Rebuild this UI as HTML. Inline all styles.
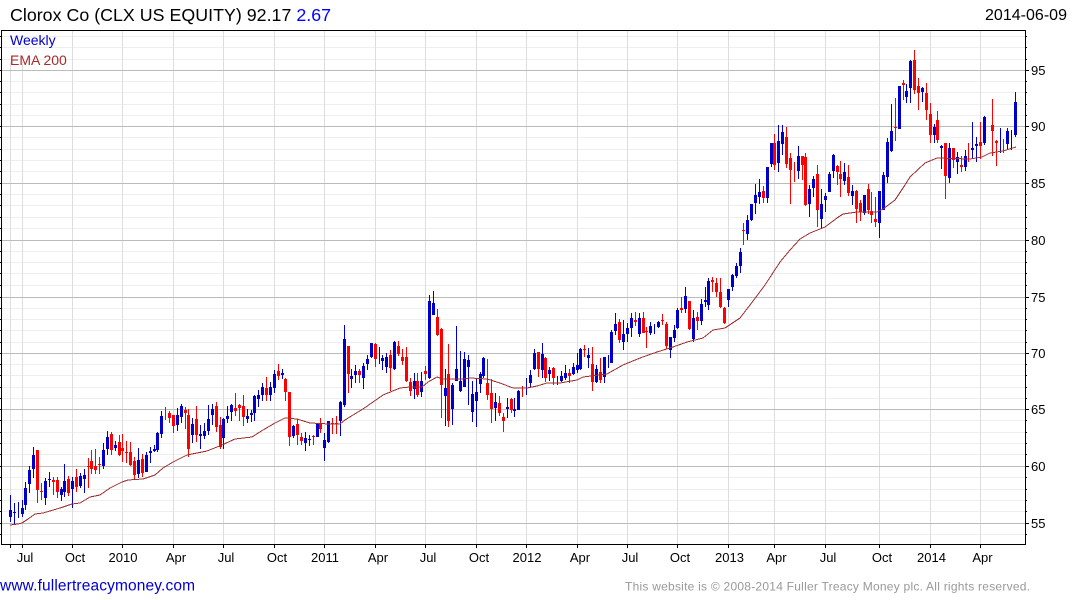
<!DOCTYPE html>
<html>
<head>
<meta charset="utf-8">
<title>Clorox Co</title>
<style>
html,body{margin:0;padding:0;background:#fff;}
svg{display:block;font-family:"Liberation Sans",Arial,sans-serif;}
</style>
</head>
<body>
<svg width="1075" height="600" viewBox="0 0 1075 600" xmlns="http://www.w3.org/2000/svg">
<rect width="1075" height="600" fill="#fff"/>
<g shape-rendering="crispEdges" fill="none">
<path stroke="#eeeeee" d="M2 36.5H1025M2 47.5H1025M2 59.5H1025M2 81.5H1025M2 92.5H1025M2 104.5H1025M2 115.5H1025M2 137.5H1025M2 149.5H1025M2 160.5H1025M2 171.5H1025M2 194.5H1025M2 205.5H1025M2 217.5H1025M2 228.5H1025M2 251.5H1025M2 262.5H1025M2 273.5H1025M2 285.5H1025M2 308.5H1025M2 319.5H1025M2 330.5H1025M2 342.5H1025M2 364.5H1025M2 375.5H1025M2 387.5H1025M2 398.5H1025M2 420.5H1025M2 432.5H1025M2 443.5H1025M2 454.5H1025M2 477.5H1025M2 489.5H1025M2 500.5H1025M2 511.5H1025M2 534.5H1025"/>
<path stroke="#dddddd" d="M10.5 62V544M22.5 62V544M72.5 31V544M122.5 31V544M173.5 31V544M223.5 31V544M274.5 31V544M324.5 31V544M375.5 31V544M425.5 31V544M476.5 31V544M526.5 31V544M577.5 31V544M627.5 31V544M677.5 31V544M728.5 31V544M774.5 31V544M825.5 31V544M879.5 31V544M930.5 31V544M980.5 31V544"/>
<path stroke="#bbbbbb" d="M2 70.5H1025M2 126.5H1025M2 183.5H1025M2 240.5H1025M2 297.5H1025M2 353.5H1025M2 409.5H1025M2 466.5H1025M2 523.5H1025"/>

<!-- blue wicks -->
<path stroke="#0000cc" stroke-width="1" d="M10.5 495V522M14.5 503V524M18.5 502V518M22.5 500V517M25.5 482V510M29.5 466V493M33.5 447V478M45.5 478V505M49.5 472V487M61.5 487V501M64.5 464V497M72.5 477V508M80.5 473V488M84.5 469V493M103.5 443V469M107.5 431V455M115.5 441V451M138.5 448V478M146.5 452V472M150.5 447V463M154.5 445V452M157.5 432V452M161.5 411V438M177.5 408V431M181.5 404V423M192.5 418V443M200.5 425V449M204.5 423V439M208.5 405V435M212.5 404V425M223.5 418V449M227.5 406V423M231.5 404V421M247.5 409V423M251.5 410V422M254.5 395V421M258.5 390V407M262.5 383V401M270.5 382V401M274.5 370V393M282.5 369V379M293.5 425V438M305.5 432V451M309.5 435V446M317.5 423V437M324.5 433V461M328.5 421V443M340.5 401V436M344.5 325V407M351.5 369V388M355.5 365V383M363.5 363V389M367.5 355V370M371.5 343V358M379.5 347V364M382.5 355V370M386.5 353V373M394.5 341V370M414.5 373V399M421.5 372V397M429.5 295V379M433.5 291V315M445.5 369V426M452.5 383V425M456.5 326V380M460.5 351V392M464.5 352V387M468.5 355V405M472.5 381V422M476.5 378V427M480.5 372V393M483.5 357V378M495.5 393V421M507.5 398V418M514.5 398V417M518.5 390V410M526.5 378V395M530.5 370V388M534.5 349V370M542.5 343V378M549.5 367V381M557.5 376V385M561.5 371V382M565.5 365V380M573.5 363V375M577.5 353V373M580.5 348V370M588.5 348V368M596.5 365V383M604.5 357V383M608.5 355V368M611.5 330V363M615.5 313V335M623.5 320V350M627.5 323V342M631.5 313V337M639.5 313V337M650.5 322V335M654.5 324V334M658.5 321V328M670.5 337V358M674.5 325V342M677.5 308V329M685.5 287V313M693.5 310V342M701.5 299V325M705.5 287V307M708.5 278V310M728.5 289V307M732.5 274V291M736.5 263V278M740.5 248V273M747.5 215V240M751.5 204V221M755.5 184V214M759.5 179V204M767.5 167V203M771.5 143V167M778.5 125V172M782.5 125V155M798.5 146V179M809.5 185V217M813.5 176V197M821.5 189V228M825.5 193V212M829.5 172V192M833.5 154V178M844.5 163V185M852.5 185V205M864.5 195V215M879.5 191V238M883.5 172V210M887.5 138V183M891.5 104V152M899.5 86V129M906.5 84V103M910.5 60V103M922.5 87V102M934.5 124V143M941.5 145V169M949.5 143V183M957.5 152V174M965.5 150V171M972.5 122V159M976.5 137V162M984.5 116V145M1000.5 128V153M1007.5 128V150M1011.5 130V150M1015.5 92V137"/>
<!-- blue bodies -->
<path stroke="#0000cc" stroke-width="3" d="M10.5 510V517M14.5 512V513M22.5 508V514M25.5 488V505M29.5 470V484M33.5 455V469M45.5 481V498M49.5 479V480M61.5 489V495M64.5 481V492M72.5 481V489M80.5 476V486M84.5 475V479M103.5 450V466M107.5 437V449M115.5 445V448M138.5 460V474M146.5 455V472M150.5 451V453M154.5 449V451M157.5 433V450M161.5 416V434M177.5 415V425M181.5 406V417M192.5 424V435M200.5 434V436M204.5 431V436M208.5 419V431M212.5 409V415M223.5 419V438M227.5 416V419M231.5 405V412M247.5 416V419M251.5 413V415M254.5 396V413M258.5 395V399M262.5 387V395M270.5 387V395M274.5 374V388M282.5 373V375M293.5 426V436M305.5 438V443M309.5 439V440M317.5 424V437M324.5 440V448M328.5 421V442M340.5 402V421M344.5 339V405M351.5 376V379M355.5 371V375M363.5 366V378M367.5 359V364M371.5 343V357M382.5 358V361M386.5 357V367M394.5 342V369M414.5 381V389M421.5 381V392M429.5 301V378M433.5 303V315M445.5 388V396M452.5 385V409M456.5 369V381M460.5 381V391M464.5 359V387M468.5 360V367M472.5 394V412M476.5 392V401M480.5 374V384M483.5 358V376M495.5 402V408M507.5 407V409M514.5 409V411M518.5 391V410M530.5 375V383M534.5 353V369M542.5 354V370M549.5 370V374M561.5 376V381M565.5 373V378M573.5 367V374M577.5 365V370M580.5 349V369M588.5 355V358M596.5 369V382M604.5 357V377M611.5 332V363M615.5 324V331M623.5 334V342M627.5 328V334M631.5 318V328M639.5 318V334M650.5 326V333M658.5 322V327M670.5 337V350M674.5 330V338M677.5 310V328M685.5 296V309M693.5 318V339M701.5 304V321M705.5 300V302M708.5 281V305M728.5 289V300M732.5 275V287M736.5 266V276M740.5 252V266M747.5 220V234M751.5 204V220M755.5 195V203M759.5 192V197M767.5 167V198M771.5 143V164M778.5 141V163M782.5 132V144M798.5 156V171M809.5 189V204M813.5 179V188M821.5 204V219M825.5 196V200M829.5 174V192M833.5 155V171M844.5 172V181M852.5 191V196M864.5 195V213M879.5 191V223M883.5 175V210M887.5 142V177M891.5 131V151M899.5 86V129M906.5 91V97M910.5 61V88M922.5 88V92M934.5 127V135M941.5 146V148M949.5 148V178M957.5 157V162M965.5 156V167M972.5 148V150M976.5 144V146M984.5 117V143M1007.5 131V144M1015.5 102V135"/>
<!-- red wicks -->
<path stroke="#ff0000" stroke-width="1" d="M37.5 450V503M41.5 483V500M53.5 477V495M57.5 477V498M68.5 476V496M76.5 469V492M88.5 458V488M91.5 450V474M95.5 449V474M99.5 457V474M111.5 432V455M119.5 435V456M122.5 434V462M126.5 441V463M130.5 442V466M134.5 457V479M142.5 454V477M165.5 407V420M169.5 411V423M173.5 415V433M185.5 407V429M188.5 409V457M196.5 406V442M216.5 402V432M220.5 417V449M235.5 393V416M239.5 404V421M243.5 395V426M266.5 377V401M278.5 364V380M285.5 378V401M289.5 392V446M297.5 419V445M301.5 433V445M313.5 435V445M320.5 418V433M332.5 418V434M336.5 416V434M348.5 346V393M359.5 369V383M375.5 343V367M390.5 350V391M398.5 341V356M402.5 349V365M406.5 347V382M410.5 378V396M417.5 373V397M425.5 366V380M437.5 309V336M441.5 328V418M448.5 344V427M487.5 359V400M491.5 379V423M499.5 396V416M503.5 413V432M511.5 398V413M522.5 386V397M538.5 352V377M545.5 357V382M553.5 367V385M569.5 369V383M584.5 345V357M592.5 347V391M600.5 358V383M619.5 319V343M635.5 312V326M643.5 312V333M646.5 327V348M662.5 314V325M666.5 322V349M681.5 297V313M689.5 301V330M697.5 312V330M712.5 277V292M716.5 278V297M720.5 278V308M724.5 307V324M743.5 223V245M763.5 186V203M774.5 134V170M786.5 127V168M790.5 153V204M794.5 162V182M802.5 156V180M805.5 153V206M817.5 165V227M837.5 165V185M840.5 161V197M848.5 165V196M856.5 190V223M860.5 200V221M868.5 184V214M871.5 192V223M875.5 197V227M895.5 98V141M903.5 80V100M914.5 50V94M918.5 78V110M926.5 83V120M930.5 103V143M937.5 111V143M945.5 143V199M953.5 148V168M961.5 156V172M968.5 143V162M980.5 122V159M992.5 99V156M996.5 140V166M1003.5 139V153"/>
<!-- red bodies -->
<path stroke="#ff0000" stroke-width="3" d="M37.5 450V490M41.5 491V492M53.5 480V482M57.5 480V492M68.5 479V493M76.5 477V487M88.5 466V467M91.5 461V469M95.5 466V470M99.5 464V465M111.5 434V450M119.5 442V455M122.5 448V451M126.5 452V453M130.5 452V465M134.5 461V475M142.5 459V473M169.5 413V418M173.5 415V426M185.5 410V413M188.5 415V449M196.5 419V435M216.5 406V427M220.5 425V447M235.5 408V411M239.5 405V408M243.5 406V417M266.5 388V395M278.5 371V376M285.5 379V392M289.5 392V437M297.5 424V435M301.5 437V441M313.5 436V437M320.5 423V429M332.5 423V424M336.5 423V424M348.5 346V374M359.5 371V375M375.5 344V359M390.5 355V368M398.5 346V354M402.5 357V361M406.5 357V381M410.5 382V391M417.5 381V395M425.5 371V374M437.5 317V335M441.5 329V385M448.5 374V421M487.5 383V395M491.5 393V409M499.5 403V413M503.5 417V421M511.5 399V410M538.5 352V369M545.5 358V378M553.5 368V378M569.5 373V376M584.5 349V350M592.5 364V382M600.5 372V380M619.5 322V340M635.5 320V322M643.5 318V333M646.5 331V332M662.5 320V321M666.5 324V346M681.5 308V310M689.5 301V329M697.5 317V321M712.5 280V282M716.5 283V292M720.5 292V307M724.5 308V323M743.5 230V231M763.5 191V198M774.5 143V165M786.5 137V164M790.5 158V170M802.5 156V165M805.5 157V205M817.5 174V210M837.5 166V172M840.5 174V179M848.5 177V193M856.5 191V209M860.5 203V212M868.5 189V210M871.5 211V215M875.5 219V222M895.5 127V128M903.5 83V85M914.5 60V90M918.5 86V93M926.5 93V110M930.5 114V135M937.5 120V140M945.5 143V176M953.5 148V160M961.5 165V167M980.5 142V146M992.5 125V131M996.5 141V143"/>

<!-- EMA 200 -->
<polyline stroke="#a03030" stroke-width="1" points="10,525 18,524 22,523 28,519 35,514 43,513 50,511 60,508 72,504 80,503 90,497 100,495 110,488 122,482 128,480 143,479 155,475 163,468 173,462 187,455 207,451 222,445 235,439 252,437 263,430 275,423 285,418 297,419 310,423 330,424 340,424 345,420 353,415 363,409 383,395 400,388 410,387 422,387 428,382 437,377 443,379 463,379 470,378 487,379 500,383 513,388 527,388 537,386 547,383 560,383 577,380 583,377 607,374 623,365 640,358 657,352 673,347 687,342 703,338 713,330 725,328 740,318 750,305 765,285 780,262 790,250 800,239 810,233 825,227 837,218 843,214 857,212 877,212 883,209 895,200 905,185 910,177 925,163 937,158 970,159 982,157 990,153 1003,151 1016,147"/>

<!-- frame and ticks -->
<path stroke="#000" d="M1.5 30V545M1 30.5H1026M1025.5 30V545M1 544.5H1026"/>
<path stroke="#000" d="M0 36.5H1M0 47.5H1M0 59.5H1M0 70.5H1M0 81.5H1M0 92.5H1M0 104.5H1M0 115.5H1M0 126.5H1M0 137.5H1M0 149.5H1M0 160.5H1M0 171.5H1M0 183.5H1M0 194.5H1M0 205.5H1M0 217.5H1M0 228.5H1M0 240.5H1M0 251.5H1M0 262.5H1M0 273.5H1M0 285.5H1M0 297.5H1M0 308.5H1M0 319.5H1M0 330.5H1M0 342.5H1M0 353.5H1M0 364.5H1M0 375.5H1M0 387.5H1M0 398.5H1M0 409.5H1M0 420.5H1M0 432.5H1M0 443.5H1M0 454.5H1M0 466.5H1M0 477.5H1M0 489.5H1M0 500.5H1M0 511.5H1M0 523.5H1M0 534.5H1"/>
<path stroke="#000" d="M1026 36.5H1027M1026 47.5H1027M1026 59.5H1027M1026 81.5H1027M1026 92.5H1027M1026 104.5H1027M1026 115.5H1027M1026 137.5H1027M1026 149.5H1027M1026 160.5H1027M1026 171.5H1027M1026 194.5H1027M1026 205.5H1027M1026 217.5H1027M1026 228.5H1027M1026 251.5H1027M1026 262.5H1027M1026 273.5H1027M1026 285.5H1027M1026 308.5H1027M1026 319.5H1027M1026 330.5H1027M1026 342.5H1027M1026 364.5H1027M1026 375.5H1027M1026 387.5H1027M1026 398.5H1027M1026 420.5H1027M1026 432.5H1027M1026 443.5H1027M1026 454.5H1027M1026 477.5H1027M1026 489.5H1027M1026 500.5H1027M1026 511.5H1027M1026 534.5H1027"/>
<path stroke="#000" d="M1026 70.5H1029M1026 126.5H1029M1026 183.5H1029M1026 240.5H1029M1026 297.5H1029M1026 353.5H1029M1026 409.5H1029M1026 466.5H1029M1026 523.5H1029"/>
<path stroke="#000" d="M10.5 545V548M22.5 545V548M72.5 545V548M122.5 545V548M173.5 545V548M223.5 545V548M274.5 545V548M324.5 545V548M375.5 545V548M425.5 545V548M476.5 545V548M526.5 545V548M577.5 545V548M627.5 545V548M677.5 545V548M728.5 545V548M774.5 545V548M825.5 545V548M879.5 545V548M930.5 545V548M980.5 545V548"/>
</g>

<text x="10" y="21" font-size="17.8" fill="#000" textLength="321" lengthAdjust="spacing">Clorox Co (CLX US EQUITY) 92.17 <tspan fill="#0000ff">2.67</tspan></text>
<text x="985" y="20" font-size="16" fill="#000" textLength="82" lengthAdjust="spacing">2014-06-09</text>
<text x="10" y="45" font-size="14" fill="#0000cc">Weekly</text>
<text x="10" y="65" font-size="14" fill="#a52a2a">EMA 200</text>

<g font-size="13" fill="#000">
<text x="1031" y="75">95</text>
<text x="1031" y="131">90</text>
<text x="1031" y="188">85</text>
<text x="1031" y="245">80</text>
<text x="1031" y="302">75</text>
<text x="1031" y="358">70</text>
<text x="1031" y="414">65</text>
<text x="1031" y="471">60</text>
<text x="1031" y="528">55</text>
</g>
<g font-size="13" fill="#000" text-anchor="middle">
<text x="25" y="562">Jul</text>
<text x="75" y="562">Oct</text>
<text x="123" y="562">2010</text>
<text x="176" y="562">Apr</text>
<text x="226" y="562">Jul</text>
<text x="277" y="562">Oct</text>
<text x="325" y="562">2011</text>
<text x="378" y="562">Apr</text>
<text x="428" y="562">Jul</text>
<text x="479" y="562">Oct</text>
<text x="527" y="562">2012</text>
<text x="580" y="562">Apr</text>
<text x="630" y="562">Jul</text>
<text x="680" y="562">Oct</text>
<text x="729.5" y="562">2013</text>
<text x="776.5" y="562">Apr</text>
<text x="828" y="562">Jul</text>
<text x="882" y="562">Oct</text>
<text x="931.5" y="562">2014</text>
<text x="982.5" y="562">Apr</text>
</g>
<text x="0" y="590.5" font-size="15.5" fill="#0000cc" textLength="195" lengthAdjust="spacing">www.fullertreacymoney.com</text>
<text x="625" y="590.5" font-size="12" fill="#999999" textLength="405" lengthAdjust="spacing">This website is © 2008-2014 Fuller Treacy Money plc. All rights reserved.</text>
</svg>
</body>
</html>
